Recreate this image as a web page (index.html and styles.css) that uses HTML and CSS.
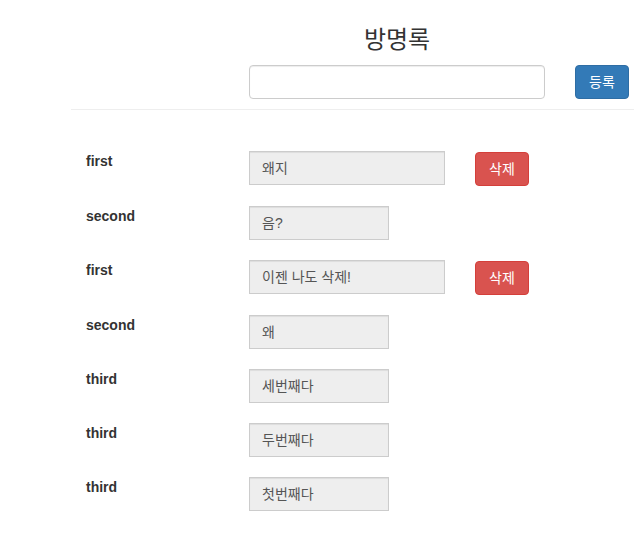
FILE: index.html
```html
<!DOCTYPE html>
<html lang="ko">
<head>
<meta charset="utf-8">
<title>방명록</title>
<link rel="stylesheet" href="styles.css">
</head>
<body>
<div class="page">
  <div class="header">
    <h1 class="title">방명록</h1>
    <div class="form">
      <input class="text-input" type="text">
      <button class="btn btn-primary">등록</button>
    </div>
  </div>
  <div class="list">
    <div class="row">
      <div class="label">first</div>
      <div class="field wide">왜지</div>
      <button class="btn btn-danger">삭제</button>
    </div>
    <div class="row">
      <div class="label">second</div>
      <div class="field">음?</div>
    </div>
    <div class="row">
      <div class="label">first</div>
      <div class="field wide">이젠 나도 삭제!</div>
      <button class="btn btn-danger">삭제</button>
    </div>
    <div class="row">
      <div class="label">second</div>
      <div class="field">왜</div>
    </div>
    <div class="row">
      <div class="label">third</div>
      <div class="field">세번째다</div>
    </div>
    <div class="row">
      <div class="label">third</div>
      <div class="field">두번째다</div>
    </div>
    <div class="row">
      <div class="label">third</div>
      <div class="field">첫번째다</div>
    </div>
  </div>
</div>
</body>
</html>
```

FILE: styles.css
```css
html, body {
  margin: 0;
  padding: 0;
  background: #fff;
}

body {
  font-family: "Liberation Sans", "Noto Sans CJK KR", sans-serif;
  font-size: 14px;
  line-height: 20px;
  color: #333;
}

.page {
  margin-left: 71px;
}

.header {
  padding-top: 25px;
  padding-bottom: 10px;
  border-bottom: 1px solid #eee;
}

.title {
  margin: 0 0 10px 0;
  padding-left: 89px;
  text-align: center;
  font-size: 24px;
  font-weight: normal;
  line-height: 30px;
  color: #333;
}

.form {
  display: flex;
  align-items: flex-start;
  gap: 30px;
  padding-left: 178px;
}

.text-input {
  box-sizing: border-box;
  width: 296px;
  height: 34px;
  margin: 0;
  padding: 6px 12px;
  border: 1px solid #ccc;
  border-radius: 4px;
  box-shadow: inset 0 1px 1px rgba(0, 0, 0, 0.075);
  font: inherit;
  color: #555;
  background: #fff;
}

.btn {
  box-sizing: border-box;
  width: 54px;
  height: 34px;
  margin: 0;
  padding: 6px 12px;
  border: 1px solid transparent;
  border-radius: 4px;
  font-family: "Liberation Sans", "Noto Sans CJK KR", sans-serif;
  font-size: 14px;
  line-height: 20px;
  color: #fff;
  text-align: center;
  white-space: nowrap;
}

.btn-primary {
  background: #337ab7;
  border-color: #2e6da4;
}

.btn-danger {
  background: #d9534f;
  border-color: #d43f3a;
  margin-left: 30px;
  margin-top: 1px;
}

.list {
  padding-top: 41px;
}

.row {
  display: flex;
  align-items: flex-start;
  margin-bottom: 20px;
}

.label {
  box-sizing: border-box;
  width: 178px;
  padding-left: 15px;
  font-weight: bold;
  color: #333;
}

.field {
  box-sizing: border-box;
  width: 140px;
  height: 34px;
  padding: 6px 12px;
  background: #eee;
  border: 1px solid #ccc;
  box-shadow: inset 0 1px 1px rgba(0, 0, 0, 0.075);
  color: #555;
  white-space: nowrap;
}

.field.wide {
  width: 196px;
}
```
